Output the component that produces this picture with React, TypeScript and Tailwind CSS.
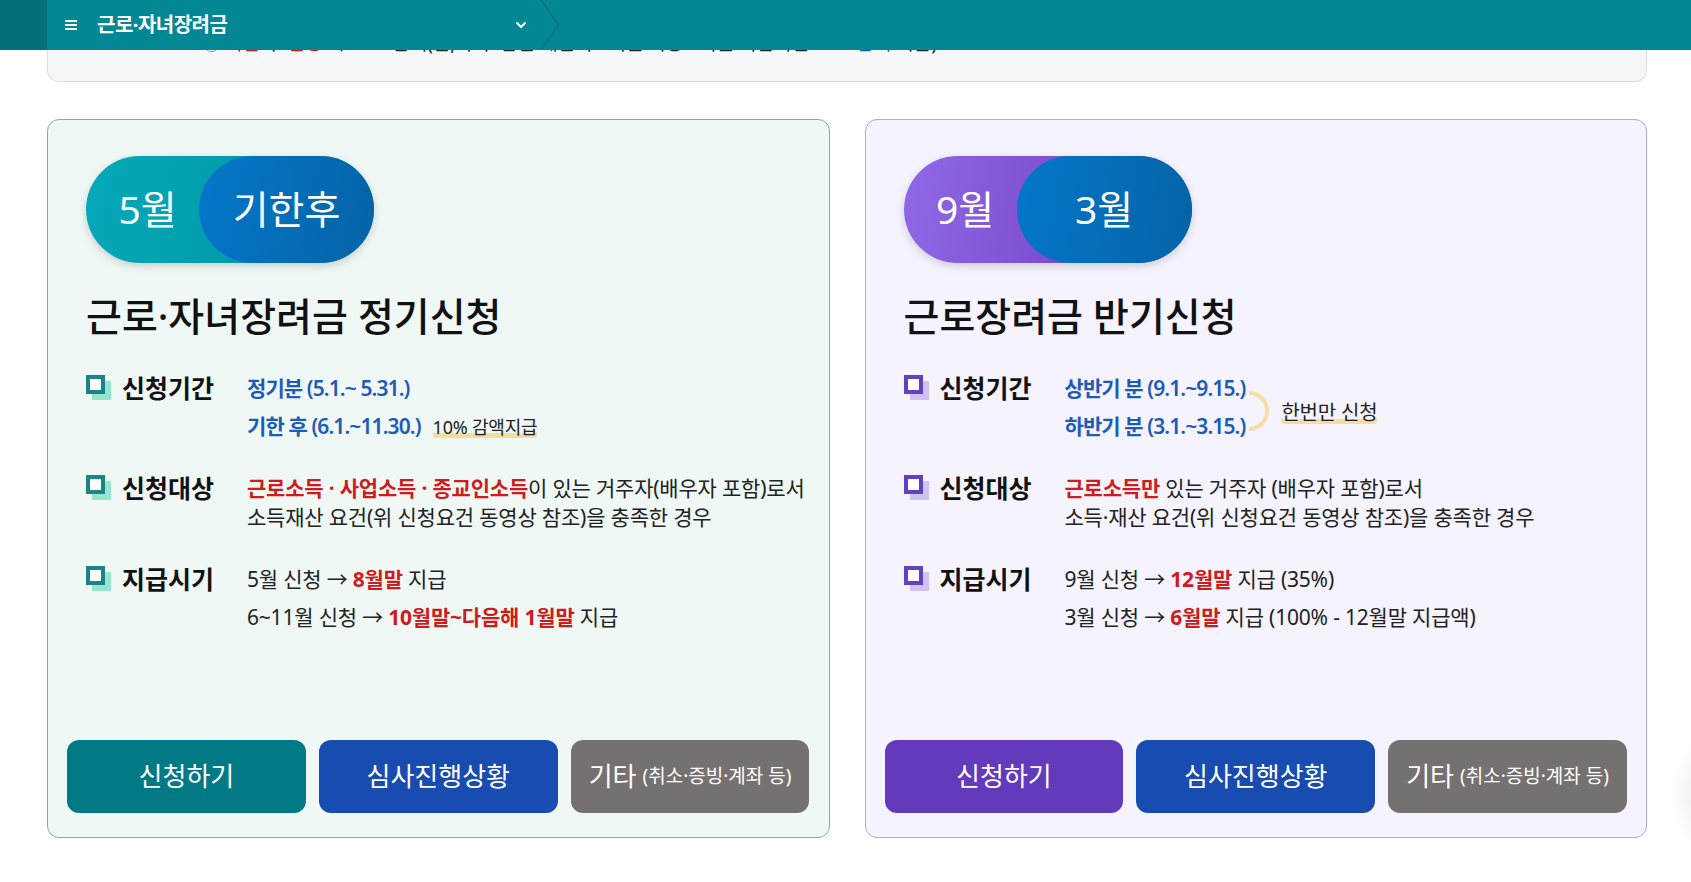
import React from 'react';
import { ChevronDown } from 'lucide-react';

type Theme = {
  card: string;
  pillLeft: string;
  iconFront: string;
  iconBack: string;
  apply: string;
};

const mint: Theme = {
  card: 'border-[#66bb9f] bg-[#eff8f5]',
  pillLeft: 'bg-[linear-gradient(100deg,#05a9b9,#00919f)]',
  iconFront: '#1c8484',
  iconBack: '#95e5cf',
  apply: 'bg-[#017a85]',
};

const lavender: Theme = {
  card: 'border-[#b3a5ea] bg-[#f5f3fd]',
  pillLeft: 'bg-[linear-gradient(100deg,#9069e8,#6c37ba)]',
  iconFront: '#6240c0',
  iconBack: '#cfc3f4',
  apply: 'bg-[#643abd]',
};

const Bullet: React.FC<{ theme: Theme }> = ({ theme }) => (
  <svg width="26" height="26" viewBox="0 0 26 26" className="mt-[1px] shrink-0">
    <rect x="6" y="6" width="19" height="19" fill={theme.iconBack} />
    <rect x="2" y="2" width="15" height="15" fill="#fff" stroke={theme.iconFront} strokeWidth="4" />
  </svg>
);

const Row: React.FC<{ theme: Theme; label: string; children: React.ReactNode }> = ({ theme, label, children }) => (
  <div className="flex">
    <div className="flex w-[161px] shrink-0 items-start">
      <Bullet theme={theme} />
      <span className="ml-[10px] text-[25px] font-bold leading-[28px] text-[#111]">{label}</span>
    </div>
    <div className="whitespace-nowrap text-[21px] leading-[29px] tracking-[-0.2px] text-[#222]">{children}</div>
  </div>
);

const Blue: React.FC<{ children: React.ReactNode }> = ({ children }) => (
  <span className="text-[21px] font-semibold tracking-[-0.9px] text-[#1e5bb8]">{children}</span>
);

const Red: React.FC<{ children: React.ReactNode }> = ({ children }) => (
  <span className="font-bold text-[#cf1b1b]">{children}</span>
);

const Marker: React.FC<{ size: string; children: React.ReactNode }> = ({ size, children }) => (
  <span className={`inline-block rounded-[3px] leading-[22px] text-[#222] shadow-[inset_0_-5px_0_#f6dd9e] ${size}`}>
    {children}
  </span>
);

const Pill: React.FC<{ theme: Theme; left: string; right: string }> = ({ theme, left, right }) => (
  <div className={`flex h-[107px] w-[288px] rounded-full shadow-[0_3px_8px_rgba(0,0,0,0.16)] ${theme.pillLeft}`}>
    <span className="flex flex-1 items-center justify-center pl-[10px] text-[39px] text-white">{left}</span>
    <span className="flex h-full w-[175px] items-center justify-center rounded-full bg-[linear-gradient(100deg,#0477ca,#0563a6)] text-[39px] text-white">
      {right}
    </span>
  </div>
);

const Buttons: React.FC<{ theme: Theme }> = ({ theme }) => (
  <div className="mt-auto grid grid-cols-3 gap-[13px]">
    <button className={`flex h-[73px] items-center justify-center rounded-[12px] text-[26px] text-white ${theme.apply}`}>
      신청하기
    </button>
    <button className="flex h-[73px] items-center justify-center rounded-[12px] bg-[#184cb0] text-[26px] text-white">
      심사진행상황
    </button>
    <button className="flex h-[73px] items-center justify-center gap-[6px] rounded-[12px] bg-[#767171] text-[26px] text-white">
      기타<span className="text-[19px]">(취소·증빙·계좌 등)</span>
    </button>
  </div>
);

const Card: React.FC<{ theme: Theme; left: string; right: string; title: string; children: React.ReactNode }> = ({
  theme,
  left,
  right,
  title,
  children,
}) => (
  <div className={`flex h-[719px] flex-col rounded-[12px] border px-[19px] pb-[24px] pt-[36px] ${theme.card}`}>
    <div className="px-[19px]">
      <Pill theme={theme} left={left} right={right} />
      <h2 className="mt-[31px] text-[39px] font-medium leading-[44px] text-[#111]">{title}</h2>
      <div className="mt-[36px] flex flex-col gap-[33px]">{children}</div>
    </div>
    <Buttons theme={theme} />
  </div>
);

export default function App() {
  return (
    <div className="min-h-screen bg-white font-['Noto_Sans','Noto_Sans_CJK_KR',sans-serif]">
      {/* Sticky top navigation */}
      <header className="fixed left-0 right-0 top-0 z-10 flex h-[50px] bg-[#028894] text-white">
        <div className="w-[47px] bg-[#036f78]" />
        <div className="flex w-[493px] items-center pl-[18px] pr-[11px]">
          <svg width="12" height="12" viewBox="0 0 12 12">
            <rect x="0" y="1" width="12" height="2" fill="#fff" />
            <rect x="0" y="5" width="12" height="2" fill="#fff" />
            <rect x="0" y="9" width="12" height="2" fill="#fff" />
          </svg>
          <span className="ml-[20px] text-[20px] font-bold tracking-[-0.5px]">근로·자녀장려금</span>
          <ChevronDown size={16} strokeWidth={3} className="ml-auto" />
        </div>
        <svg width="20" height="50" viewBox="0 0 20 50">
          <polyline points="1,0 18,25 1,50" fill="none" stroke="#0a6c74" strokeWidth="1.6" />
          <polyline points="0,1 17,26 0,51" fill="none" stroke="#37a0aa" strokeWidth="0.6" opacity="0.6" />
        </svg>
      </header>

      {/* Floating button sitting just past the right edge; only its shadow shows */}
      <div className="fixed right-[-82px] top-[756px] h-[78px] w-[78px] rounded-full bg-white shadow-[0_0_32px_rgba(0,0,0,0.16)]" />

      <div className="ml-[47px] w-[1600px]">
        {/* Notice box (scrolled mostly under the header) */}
        <div className="h-[82px] rounded-b-[12px] border border-t-0 border-[#dcdcdc] bg-[#f5f6f8] pl-[156px] pt-[31px] text-[19px] leading-[24px] text-[#222]">
          <span className="mr-[6px] text-[15px] text-[#555]">◯</span>
          <span className="text-[#d01c1c]">기한</span> 후 <span className="text-[#d01c1c]">신청</span> 시{' '}
          <span className="text-[#d01c1c]">10%</span> 감액(단, 부부 합산 재산이 1억원 이상 2억원 미만이면{' '}
          <span className="text-[#1e5bb8]">50% 감액</span> 지급)
        </div>

        <div className="mt-[37px] grid grid-cols-2 gap-[35px]">
          <Card theme={mint} left="5월" right="기한후" title="근로·자녀장려금 정기신청">
            <Row theme={mint} label="신청기간">
              <div>
                <Blue>정기분 (5.1.~ 5.31.)</Blue>
              </div>
              <div className="mt-[9px] flex items-center gap-[12px]">
                <Blue>기한 후 (6.1.~11.30.)</Blue>
                <Marker size="text-[18px]">10% 감액지급</Marker>
              </div>
            </Row>
            <Row theme={mint} label="신청대상">
              <Red>근로소득 · 사업소득 · 종교인소득</Red>이 있는 거주자(배우자 포함)로서
              <br />
              소득재산 요건(위 신청요건 동영상 참조)을 충족한 경우
            </Row>
            <Row theme={mint} label="지급시기">
              <div>
                5월 신청 → <Red>8월말</Red> 지급
              </div>
              <div className="mt-[9px]">
                6~11월 신청 → <Red>10월말~다음해 1월말</Red> 지급
              </div>
            </Row>
          </Card>

          <Card theme={lavender} left="9월" right="3월" title="근로장려금 반기신청">
            <Row theme={lavender} label="신청기간">
              <div className="flex items-center">
                <div>
                  <div>
                    <Blue>상반기 분 (9.1.~9.15.)</Blue>
                  </div>
                  <div className="mt-[9px]">
                    <Blue>하반기 분 (3.1.~3.15.)</Blue>
                  </div>
                </div>
                <div className="ml-[4px] mt-[6px] h-[40px] w-[20px] rounded-r-full border-[4px] border-l-0 border-[#f6dfa4]" />
                <span className="ml-[12px] mt-[10px]">
                  <Marker size="text-[20px]">한번만 신청</Marker>
                </span>
              </div>
            </Row>
            <Row theme={lavender} label="신청대상">
              <Red>근로소득만</Red> 있는 거주자 (배우자 포함)로서
              <br />
              소득·재산 요건(위 신청요건 동영상 참조)을 충족한 경우
            </Row>
            <Row theme={lavender} label="지급시기">
              <div>
                9월 신청 → <Red>12월말</Red> 지급 (35%)
              </div>
              <div className="mt-[9px]">
                3월 신청 → <Red>6월말</Red> 지급 (100% - 12월말 지급액)
              </div>
            </Row>
          </Card>
        </div>
      </div>
    </div>
  );
}
